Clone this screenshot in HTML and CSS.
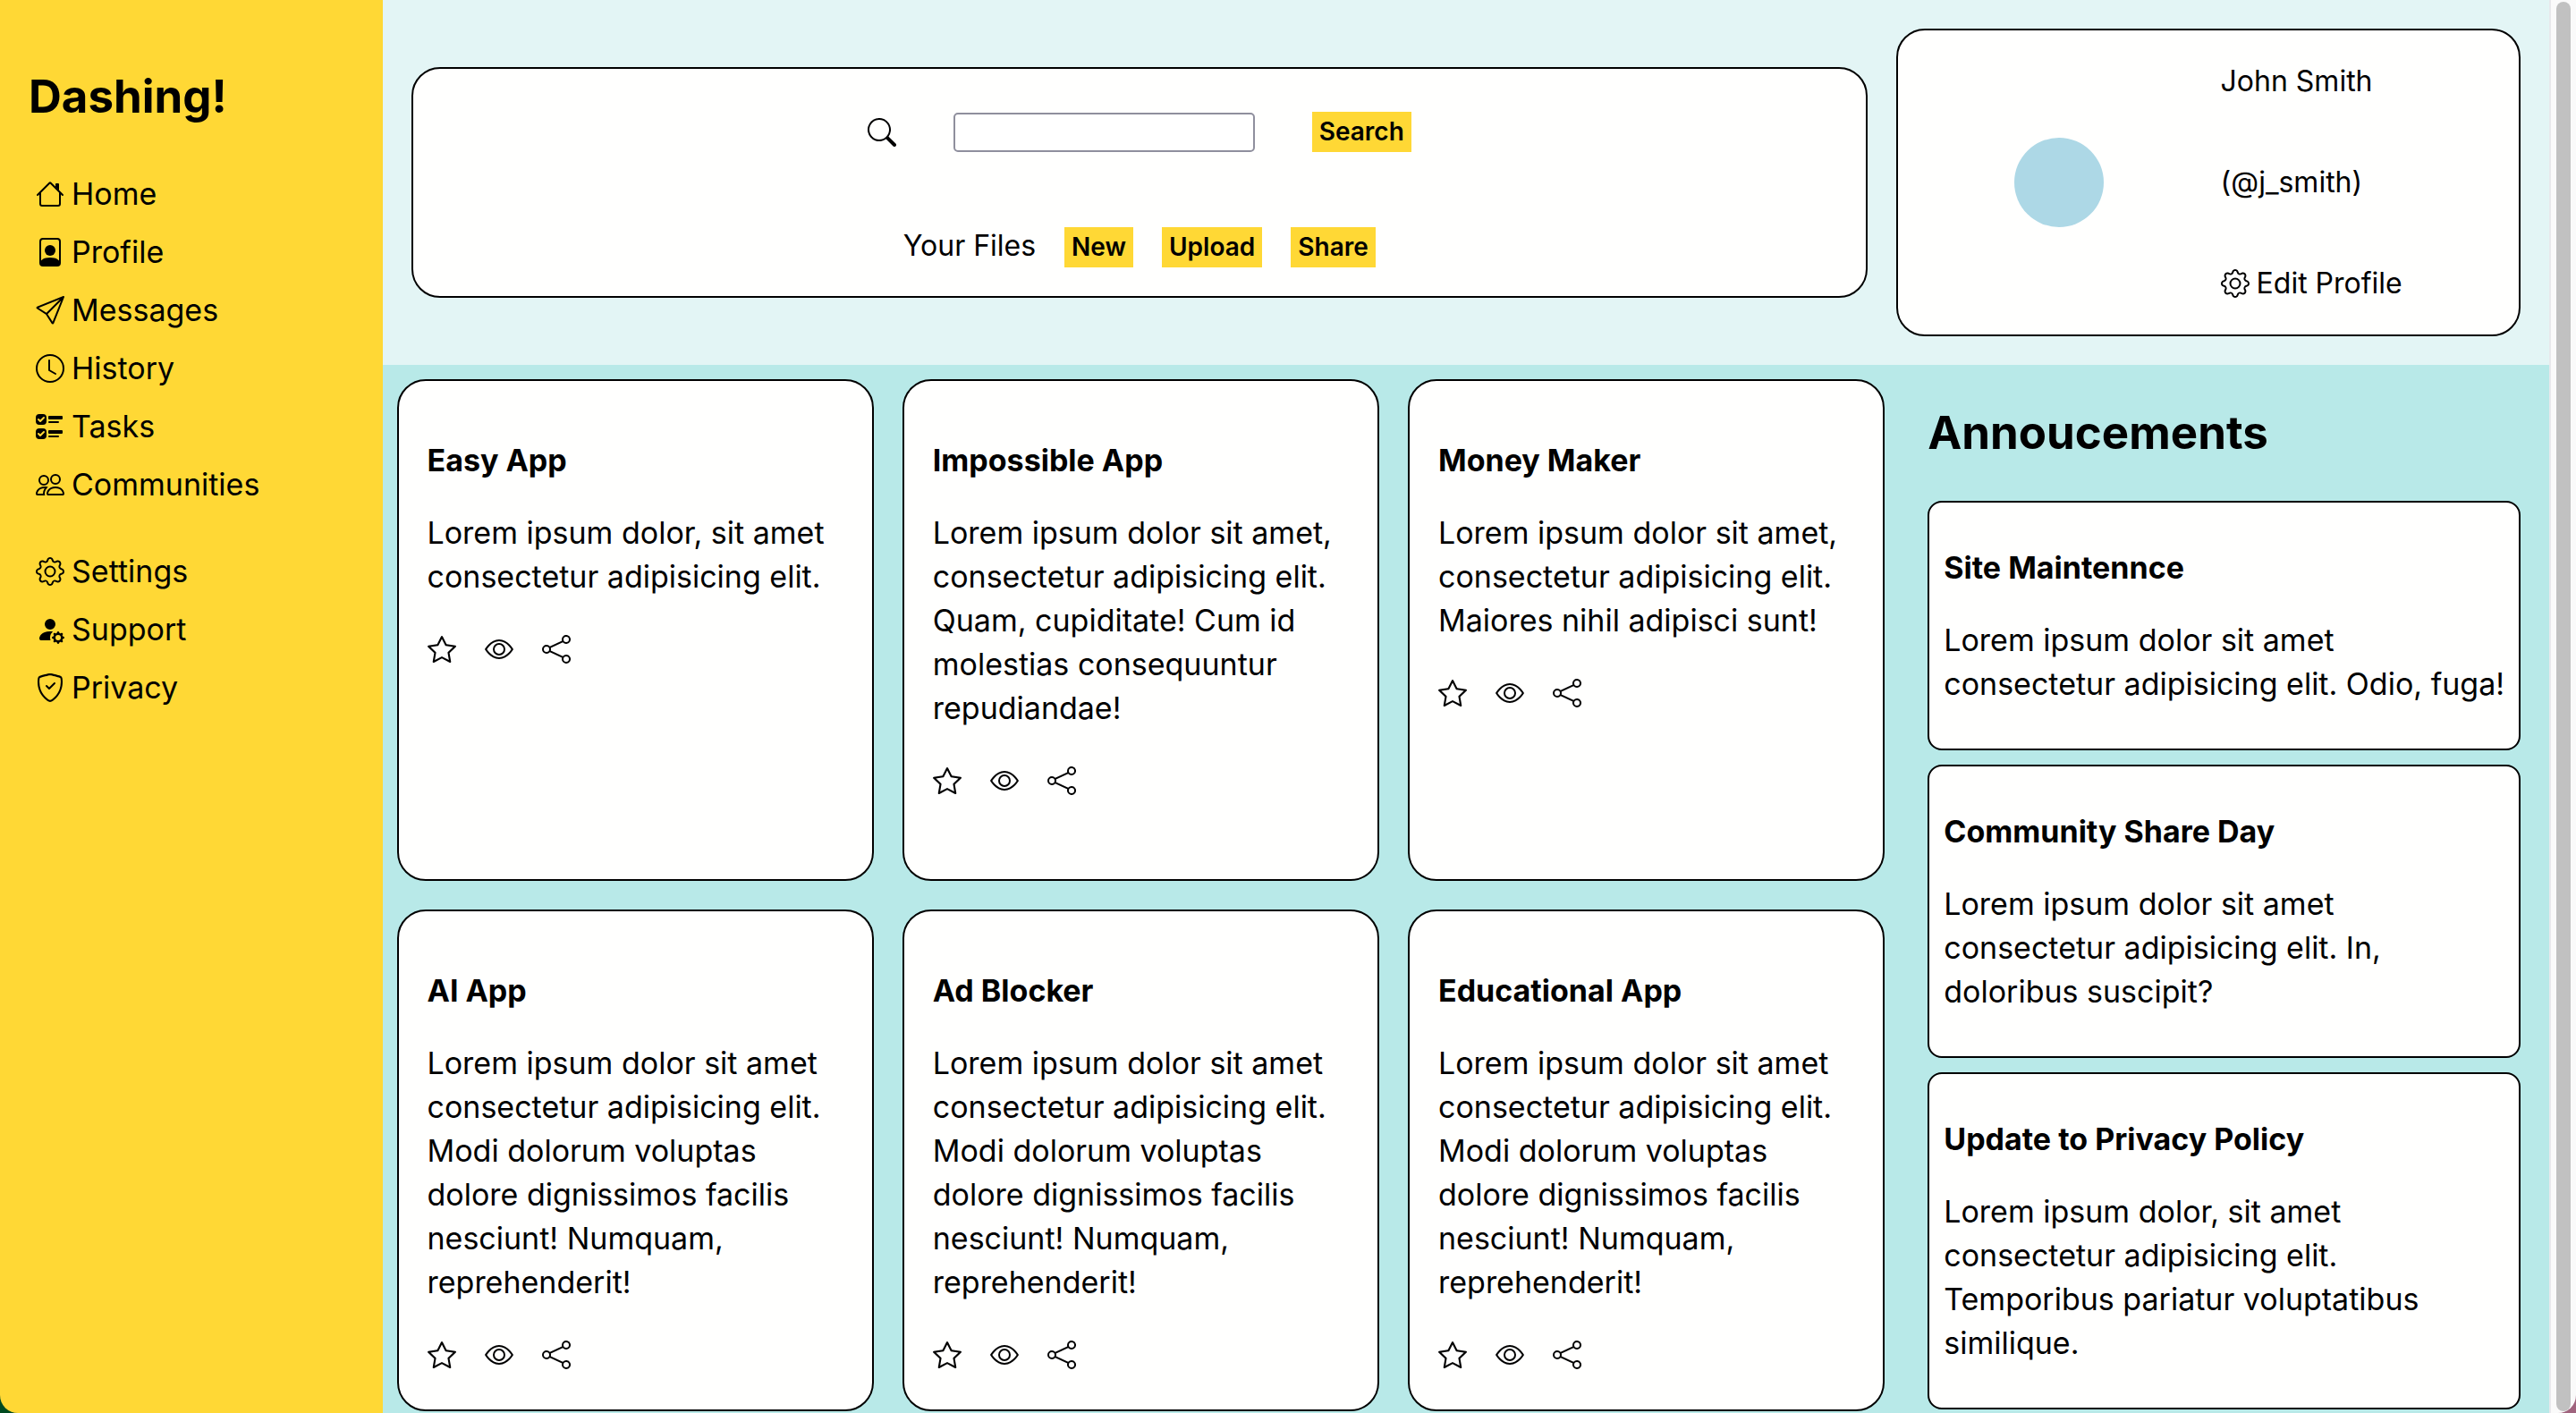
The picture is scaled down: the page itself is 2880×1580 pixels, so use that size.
FILE: index.html
```html
<!DOCTYPE html>
<html lang="en">
<head>
<meta charset="utf-8">
<title>Dashing!</title>
<link rel="stylesheet" href="styles.css">
</head>
<body>
<svg class="sprite" aria-hidden="true">
  <symbol id="house" viewBox="0 0 16 16"><path d="M2 13.5V7h1v6.5a.5.5 0 0 0 .5.5h9a.5.5 0 0 0 .5-.5V7h1v6.5a1.5 1.5 0 0 1-1.5 1.5h-9A1.5 1.5 0 0 1 2 13.5zm11-11V6l-2-2V2.5a.5.5 0 0 1 .5-.5h1a.5.5 0 0 1 .5.5z"/><path d="M7.293 1.5a1 1 0 0 1 1.414 0l6.647 6.646a.5.5 0 0 1-.708.708L8 2.207 1.354 8.854a.5.5 0 1 1-.708-.708L7.293 1.5z"/></symbol>
  <symbol id="person" viewBox="0 0 16 16"><path d="M12 1a1 1 0 0 1 1 1v10.755S12 11 8 11s-5 1.755-5 1.755V2a1 1 0 0 1 1-1h8zM4 0a2 2 0 0 0-2 2v12a2 2 0 0 0 2 2h8a2 2 0 0 0 2-2V2a2 2 0 0 0-2-2H4z"/><path d="M8 10a3 3 0 1 0 0-6 3 3 0 0 0 0 6z"/></symbol>
  <symbol id="send" viewBox="0 0 16 16"><path d="M15.854.146a.5.5 0 0 1 .11.54l-5.819 14.547a.75.75 0 0 1-1.329.124l-3.178-4.995L.643 7.184a.75.75 0 0 1 .124-1.33L15.314.037a.5.5 0 0 1 .54.11ZM6.636 10.07l2.761 4.338L14.13 2.576 6.636 10.07Zm6.787-8.201L1.591 6.602l4.339 2.76 7.494-7.493Z"/></symbol>
  <symbol id="clock" viewBox="0 0 16 16"><path d="M8 3.5a.5.5 0 0 0-1 0V9a.5.5 0 0 0 .252.434l3.5 2a.5.5 0 0 0 .496-.868L8 8.71V3.5z"/><path d="M8 16A8 8 0 1 0 8 0a8 8 0 0 0 0 16zm7-8A7 7 0 1 1 1 8a7 7 0 0 1 14 0z"/></symbol>
  <symbol id="checks" viewBox="0 0 16 16"><path d="M7 2.5a.5.5 0 0 1 .5-.5h7a.5.5 0 0 1 .5.5v1a.5.5 0 0 1-.5.5h-7a.5.5 0 0 1-.5-.5v-1zM2 1a2 2 0 0 0-2 2v2a2 2 0 0 0 2 2h2a2 2 0 0 0 2-2V3a2 2 0 0 0-2-2H2zm0 8a2 2 0 0 0-2 2v2a2 2 0 0 0 2 2h2a2 2 0 0 0 2-2v-2a2 2 0 0 0-2-2H2zm.854-3.646a.5.5 0 0 1-.708 0l-1-1a.5.5 0 1 1 .708-.708l.646.647 1.646-1.647a.5.5 0 1 1 .708.708l-2 2zm0 8a.5.5 0 0 1-.708 0l-1-1a.5.5 0 0 1 .708-.708l.646.647 1.646-1.647a.5.5 0 0 1 .708.708l-2 2zM7 10.5a.5.5 0 0 1 .5-.5h7a.5.5 0 0 1 .5.5v1a.5.5 0 0 1-.5.5h-7a.5.5 0 0 1-.5-.5v-1zm0-5a.5.5 0 0 1 .5-.5h5a.5.5 0 0 1 0 1h-5a.5.5 0 0 1-.5-.5zm0 8a.5.5 0 0 1 .5-.5h5a.5.5 0 0 1 0 1h-5a.5.5 0 0 1-.5-.5z"/></symbol>
  <symbol id="people" viewBox="0 0 16 16"><path d="M15 14s1 0 1-1-1-4-5-4-5 3-5 4 1 1 1 1h8Zm-7.978-1A.261.261 0 0 1 7 12.996c.001-.264.167-1.03.76-1.72C8.312 10.629 9.282 10 11 10c1.717 0 2.687.63 3.24 1.276.593.69.758 1.457.76 1.72l-.008.002a.274.274 0 0 1-.014.002H7.022ZM11 7a2 2 0 1 0 0-4 2 2 0 0 0 0 4Zm3-2a3 3 0 1 1-6 0 3 3 0 0 1 6 0ZM6.936 9.28a5.88 5.88 0 0 0-1.23-.247A7.35 7.35 0 0 0 5 9c-4 0-5 3-5 4 0 .667.333 1 1 1h4.216A2.238 2.238 0 0 1 5 13c0-1.01.377-2.042 1.09-2.904.243-.294.526-.569.846-.816ZM4.92 10A5.493 5.493 0 0 0 4 13H1c0-.26.164-1.03.76-1.724.545-.636 1.492-1.256 3.16-1.275ZM1.5 5.5a3 3 0 1 1 6 0 3 3 0 0 1-6 0Zm3-2a2 2 0 1 0 0 4 2 2 0 0 0 0-4Z"/></symbol>
  <symbol id="gear" viewBox="0 0 16 16"><path d="M8 4.754a3.246 3.246 0 1 0 0 6.492 3.246 3.246 0 0 0 0-6.492zM5.754 8a2.246 2.246 0 1 1 4.492 0 2.246 2.246 0 0 1-4.492 0z"/><path d="M9.796 1.343c-.527-1.79-3.065-1.79-3.592 0l-.094.319a.873.873 0 0 1-1.255.52l-.292-.16c-1.64-.892-3.433.902-2.54 2.541l.159.292a.873.873 0 0 1-.52 1.255l-.319.094c-1.79.527-1.79 3.065 0 3.592l.319.094a.873.873 0 0 1 .52 1.255l-.16.292c-.892 1.64.901 3.434 2.541 2.54l.292-.159a.873.873 0 0 1 1.255.52l.094.319c.527 1.79 3.065 1.79 3.592 0l.094-.319a.873.873 0 0 1 1.255-.52l.292.16c1.64.893 3.434-.902 2.54-2.541l-.159-.292a.873.873 0 0 1 .52-1.255l.319-.094c1.79-.527 1.79-3.065 0-3.592l-.319-.094a.873.873 0 0 1-.52-1.255l.16-.292c.893-1.64-.902-3.433-2.541-2.54l-.292.159a.873.873 0 0 1-1.255-.52l-.094-.319zm-2.633.283c.246-.835 1.428-.835 1.674 0l.094.319a1.873 1.873 0 0 0 2.693 1.115l.291-.16c.764-.415 1.6.42 1.184 1.185l-.159.292a1.873 1.873 0 0 0 1.116 2.692l.318.094c.835.246.835 1.428 0 1.674l-.319.094a1.873 1.873 0 0 0-1.115 2.693l.16.291c.415.764-.42 1.6-1.185 1.184l-.291-.159a1.873 1.873 0 0 0-2.693 1.116l-.094.318c-.246.835-1.428.835-1.674 0l-.094-.319a1.873 1.873 0 0 0-2.692-1.115l-.292.16c-.764.415-1.6-.42-1.184-1.185l.159-.291A1.873 1.873 0 0 0 1.945 8.93l-.319-.094c-.835-.246-.835-1.428 0-1.674l.319-.094A1.873 1.873 0 0 0 3.06 4.377l-.16-.292c-.415-.764.42-1.6 1.185-1.184l.292.159a1.873 1.873 0 0 0 2.692-1.115l.094-.319z"/></symbol>
  <symbol id="support" viewBox="0 0 16 16"><path d="M11 5a3 3 0 1 1-6 0 3 3 0 0 1 6 0Zm-9 8c0 1 1 1 1 1h5.256A4.493 4.493 0 0 1 8 12.5a4.49 4.49 0 0 1 1.544-3.393C9.077 9.038 8.564 9 8 9c-5 0-6 3-6 4Zm9.886-3.54c.18-.613 1.048-.613 1.229 0l.043.148a.64.64 0 0 0 .921.382l.136-.074c.561-.306 1.175.308.87.869l-.075.136a.64.64 0 0 0 .382.92l.149.045c.612.18.612 1.048 0 1.229l-.15.043a.64.64 0 0 0-.38.921l.074.136c.305.561-.309 1.175-.87.87l-.136-.075a.64.64 0 0 0-.92.382l-.045.149c-.18.612-1.048.612-1.229 0l-.043-.15a.64.64 0 0 0-.921-.38l-.136.074c-.561.305-1.175-.309-.87-.87l.075-.136a.64.64 0 0 0-.382-.92l-.148-.045c-.613-.18-.613-1.048 0-1.229l.148-.043a.64.64 0 0 0 .382-.921l-.074-.136c-.306-.561.308-1.175.869-.87l.136.075a.64.64 0 0 0 .92-.382l.045-.148ZM14 12.5a1.5 1.5 0 1 0-3 0 1.5 1.5 0 0 0 3 0Z"/></symbol>
  <symbol id="shield" viewBox="0 0 16 16"><path d="M5.338 1.59a61.44 61.44 0 0 0-2.837.856.481.481 0 0 0-.328.39c-.554 4.157.726 7.19 2.253 9.188a10.725 10.725 0 0 0 2.287 2.233c.346.244.652.42.893.533.12.057.218.095.293.118a.55.55 0 0 0 .101.025.615.615 0 0 0 .1-.025c.076-.023.174-.061.294-.118.24-.113.547-.29.893-.533a10.726 10.726 0 0 0 2.287-2.233c1.527-1.997 2.807-5.031 2.253-9.188a.48.48 0 0 0-.328-.39c-.651-.213-1.75-.56-2.837-.855C9.552 1.29 8.531 1.067 8 1.067c-.53 0-1.552.223-2.662.524zM5.072.56C6.157.265 7.31 0 8 0s1.843.265 2.928.56c1.11.3 2.229.655 2.887.87a1.54 1.54 0 0 1 1.044 1.262c.596 4.477-.787 7.795-2.465 9.99a11.775 11.775 0 0 1-2.517 2.453 7.159 7.159 0 0 1-1.048.625c-.28.132-.581.24-.829.24s-.548-.108-.829-.24a7.158 7.158 0 0 1-1.048-.625 11.777 11.777 0 0 1-2.517-2.453C1.928 10.487.545 7.169 1.141 2.692A1.54 1.54 0 0 1 2.185 1.43 62.456 62.456 0 0 1 5.072.56z"/><path d="M10.854 5.146a.5.5 0 0 1 0 .708l-3 3a.5.5 0 0 1-.708 0l-1.5-1.5a.5.5 0 1 1 .708-.708L7.5 7.793l2.646-2.647a.5.5 0 0 1 .708 0z"/></symbol>
  <symbol id="search" viewBox="0 0 16 16"><path d="M11.742 10.344a6.5 6.5 0 1 0-1.397 1.398h-.001c.03.04.062.078.098.115l3.85 3.85a1 1 0 0 0 1.415-1.414l-3.85-3.85a1.007 1.007 0 0 0-.115-.1zM12 6.5a5.5 5.5 0 1 1-11 0 5.5 5.5 0 0 1 11 0z"/></symbol>
  <symbol id="star" viewBox="0 0 16 16"><path d="M2.866 14.85c-.078.444.36.791.746.593l4.39-2.256 4.389 2.256c.386.198.824-.149.746-.592l-.83-4.73 3.522-3.356c.33-.314.16-.888-.282-.95l-4.898-.696L8.465.792a.513.513 0 0 0-.927 0L5.354 5.12l-4.898.696c-.441.062-.612.636-.283.95l3.523 3.356-.83 4.73zm4.905-2.767-3.686 1.894.694-3.957a.565.565 0 0 0-.163-.505L1.71 6.745l4.052-.576a.525.525 0 0 0 .393-.288L8 2.223l1.847 3.658a.525.525 0 0 0 .393.288l4.052.575-2.906 2.77a.565.565 0 0 0-.163.506l.694 3.957-3.686-1.894a.503.503 0 0 0-.461 0z"/></symbol>
  <symbol id="eye" viewBox="0 0 16 16"><path d="M16 8s-3-5.500-8-5.500S0 8 0 8s3 5.500 8 5.500S16 8 16 8zM1.173 8a13.133 13.133 0 0 1 1.660-2.043C4.120 4.668 5.880 3.500 8 3.500c2.120 0 3.879 1.168 5.168 2.457A13.133 13.133 0 0 1 14.828 8c-.058.087-.122.183-.195.288-.335.480-.830 1.120-1.465 1.755C11.879 11.332 10.119 12.500 8 12.500c-2.120 0-3.879-1.168-5.168-2.457A13.134 13.134 0 0 1 1.172 8z"/><path d="M8 5.500a2.500 2.500 0 1 0 0 5 2.500 2.500 0 0 0 0-5zM4.500 8a3.500 3.500 0 1 1 7 0 3.500 3.500 0 0 1-7 0z"/></symbol>
  <symbol id="share" viewBox="0 0 16 16"><path d="M13.500 1a1.500 1.500 0 1 0 0 3 1.500 1.500 0 0 0 0-3zM11 2.500a2.500 2.500 0 1 1 .603 1.628l-6.718 3.120a2.499 2.499 0 0 1 0 1.504l6.718 3.120a2.500 2.500 0 1 1-.488.876l-6.718-3.120a2.500 2.500 0 1 1 0-3.256l6.718-3.120A2.500 2.500 0 0 1 11 2.500zm-8.500 4a1.500 1.500 0 1 0 0 3 1.500 1.500 0 0 0 0-3zm11 5.500a1.500 1.500 0 1 0 0 3 1.500 1.500 0 0 0 0-3z"/></symbol>
</svg>
<div class="page">
  <aside class="sidebar">
    <h1 class="brand">Dashing!</h1>
    <nav class="menus">
      <ul class="menu">
        <li><a href="#"><svg class="icon"><use href="#house"/></svg>Home</a></li>
        <li><a href="#"><svg class="icon"><use href="#person"/></svg>Profile</a></li>
        <li><a href="#"><svg class="icon"><use href="#send"/></svg>Messages</a></li>
        <li><a href="#"><svg class="icon"><use href="#clock"/></svg>History</a></li>
        <li><a href="#"><svg class="icon"><use href="#checks"/></svg>Tasks</a></li>
        <li><a href="#"><svg class="icon"><use href="#people"/></svg>Communities</a></li>
      </ul>
      <ul class="menu">
        <li><a href="#"><svg class="icon"><use href="#gear"/></svg>Settings</a></li>
        <li><a href="#"><svg class="icon"><use href="#support"/></svg>Support</a></li>
        <li><a href="#"><svg class="icon"><use href="#shield"/></svg>Privacy</a></li>
      </ul>
    </nav>
  </aside>

  <div class="content">
    <header class="header">
      <section class="panel tools">
        <form class="search" action="#">
          <label for="query" aria-label="Search"><svg class="icon"><use href="#search"/></svg></label>
          <input id="query" class="query" type="search">
          <button class="button" type="button">Search</button>
        </form>
        <div class="files">
          <span>Your Files</span>
          <button class="button" type="button">New</button>
          <button class="button" type="button">Upload</button>
          <button class="button" type="button">Share</button>
        </div>
      </section>
      <section class="panel profile">
        <div class="avatar"></div>
        <div class="details">
          <span>John Smith</span>
          <span>(@j_smith)</span>
          <a href="#"><svg class="icon"><use href="#gear"/></svg>Edit Profile</a>
        </div>
      </section>
    </header>

    <main class="main">
      <section class="projects">
        <article class="panel card">
          <h3>Easy App</h3>
          <p>Lorem ipsum dolor, sit amet consectetur adipisicing elit.</p>
          <div class="actions"><a href="#" aria-label="Star"><svg class="icon"><use href="#star"/></svg></a><a href="#" aria-label="Watch"><svg class="icon"><use href="#eye"/></svg></a><a href="#" aria-label="Share"><svg class="icon"><use href="#share"/></svg></a></div>
        </article>
        <article class="panel card">
          <h3>Impossible App</h3>
          <p>Lorem ipsum dolor sit amet, consectetur adipisicing elit. Quam, cupiditate! Cum id molestias consequuntur repudiandae!</p>
          <div class="actions"><a href="#" aria-label="Star"><svg class="icon"><use href="#star"/></svg></a><a href="#" aria-label="Watch"><svg class="icon"><use href="#eye"/></svg></a><a href="#" aria-label="Share"><svg class="icon"><use href="#share"/></svg></a></div>
        </article>
        <article class="panel card">
          <h3>Money Maker</h3>
          <p>Lorem ipsum dolor sit amet, consectetur adipisicing elit. Maiores nihil adipisci sunt!</p>
          <div class="actions"><a href="#" aria-label="Star"><svg class="icon"><use href="#star"/></svg></a><a href="#" aria-label="Watch"><svg class="icon"><use href="#eye"/></svg></a><a href="#" aria-label="Share"><svg class="icon"><use href="#share"/></svg></a></div>
        </article>
        <article class="panel card">
          <h3>AI App</h3>
          <p>Lorem ipsum dolor sit amet consectetur adipisicing elit. Modi dolorum voluptas dolore dignissimos facilis nesciunt! Numquam, reprehenderit!</p>
          <div class="actions"><a href="#" aria-label="Star"><svg class="icon"><use href="#star"/></svg></a><a href="#" aria-label="Watch"><svg class="icon"><use href="#eye"/></svg></a><a href="#" aria-label="Share"><svg class="icon"><use href="#share"/></svg></a></div>
        </article>
        <article class="panel card">
          <h3>Ad Blocker</h3>
          <p>Lorem ipsum dolor sit amet consectetur adipisicing elit. Modi dolorum voluptas dolore dignissimos facilis nesciunt! Numquam, reprehenderit!</p>
          <div class="actions"><a href="#" aria-label="Star"><svg class="icon"><use href="#star"/></svg></a><a href="#" aria-label="Watch"><svg class="icon"><use href="#eye"/></svg></a><a href="#" aria-label="Share"><svg class="icon"><use href="#share"/></svg></a></div>
        </article>
        <article class="panel card">
          <h3>Educational App</h3>
          <p>Lorem ipsum dolor sit amet consectetur adipisicing elit. Modi dolorum voluptas dolore dignissimos facilis nesciunt! Numquam, reprehenderit!</p>
          <div class="actions"><a href="#" aria-label="Star"><svg class="icon"><use href="#star"/></svg></a><a href="#" aria-label="Watch"><svg class="icon"><use href="#eye"/></svg></a><a href="#" aria-label="Share"><svg class="icon"><use href="#share"/></svg></a></div>
        </article>
      </section>

      <section class="news">
        <h2>Annoucements</h2>
        <article class="notice">
          <h3>Site Maintennce</h3>
          <p>Lorem ipsum dolor sit amet consectetur adipisicing elit. Odio, fuga!</p>
        </article>
        <article class="notice">
          <h3>Community Share Day</h3>
          <p>Lorem ipsum dolor sit amet consectetur adipisicing elit. In, doloribus suscipit?</p>
        </article>
        <article class="notice">
          <h3>Update to Privacy Policy</h3>
          <p>Lorem ipsum dolor, sit amet consectetur adipisicing elit. Temporibus pariatur voluptatibus similique.</p>
        </article>
      </section>
    </main>
  </div>
  <div class="scrollbar"><div class="thumb"></div></div>
</div>
</body>
</html>
```
FILE: styles.css
```css
* { box-sizing: border-box; }

html {
  background: linear-gradient(to right, #004a20 50%, #a0647e 50%);
}

body {
  margin: 0;
  color: #000;
  font: 400 34px/49px Inter, "Open Sans", sans-serif;
}

h1, h2, h3, p, ul { margin: 0; padding: 0; }
h1, h2 { font-size: 51px; line-height: 72px; }
h3 { font-size: 34px; font-weight: 700; line-height: 49px; }
a { color: inherit; text-decoration: none; }

.sprite { display: none; }
.icon { display: block; width: 32px; height: 32px; fill: currentColor; }

.page {
  display: grid;
  grid-template-columns: 3fr 17fr 30px;
  height: 100vh;
  overflow: hidden;
  border-radius: 0 0 20px 20px;
}

.sidebar { padding: 72px 32px 32px; background: #ffd835; }
.brand { margin-bottom: 48px; }
.menus { display: flex; flex-direction: column; gap: 48px; padding-left: 8px; }
.menu { display: flex; flex-direction: column; gap: 16px; list-style: none; }
.menu a, .details a { display: flex; align-items: center; gap: 8px; }

.content { display: flex; flex-direction: column; min-width: 0; background: #b8e9e8; }

.panel { border: 2px solid #000; border-radius: 32px; background: #fffffe; }

.header {
  display: grid;
  grid-template-columns: 7fr 3fr;
  gap: 32px;
  align-items: center;
  padding: 32px;
  background: #e3f5f5;
  font-size: 32px;
}
.tools { display: flex; flex-direction: column; gap: 64px; padding: 32px; }
.search { display: flex; align-items: center; justify-content: center; gap: 64px; padding: 16px 0; }
.query {
  width: 337px;
  height: 44px;
  padding: 4px 8px;
  border: 2px solid #8f8f9d;
  border-radius: 5px;
  background: #fff;
  font: inherit;
}
.files { display: flex; align-items: flex-end; justify-content: center; gap: 32px; }
.button {
  height: 45px;
  padding: 0 8px;
  border: 0;
  background: #ffd835;
  color: #000;
  font: 600 28px/45px Inter, "Open Sans", sans-serif;
}
.profile { display: flex; align-items: center; justify-content: space-evenly; padding: 32px 0 33px; }
.avatar { width: 100px; height: 100px; border-radius: 50%; background: #add8e6; }
.details { display: flex; flex-direction: column; gap: 64px; }

.main { display: grid; grid-template-columns: 7fr 3fr; }
.projects {
  display: grid;
  grid-template-columns: repeat(3, 1fr);
  grid-auto-rows: 1fr;
  gap: 32px;
  padding: 16px;
}
.card { display: flex; flex-direction: column; gap: 32px; padding: 64px 32px 36px; }
.actions { display: flex; align-items: center; gap: 32px; height: 50px; }

.news { display: flex; flex-direction: column; gap: 16px; padding: 40px 32px 0; }
.news h2 { margin-bottom: 24px; }
.notice {
  display: flex;
  flex-direction: column;
  gap: 32px;
  padding: 48px 8px 48px 16px;
  border: 2px solid #000;
  border-radius: 16px;
  background: #fffffe;
}

.scrollbar { padding: 2px 6px 16px; border-left: 2px solid #e8e8ec; background: #fafafa; }
.thumb { height: 100%; border-radius: 8px; background: #c1c1c1; }
```
